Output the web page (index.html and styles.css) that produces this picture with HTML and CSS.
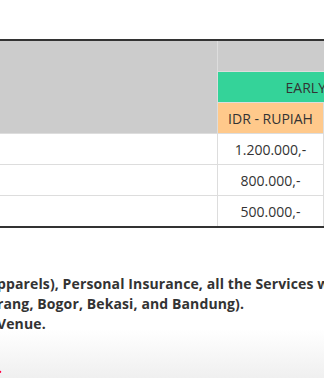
FILE: index.html
```html
<!DOCTYPE html>
<html>
<head>
<meta charset="utf-8">
<link rel="stylesheet" href="styles.css">
</head>
<body>
<div class="page">
  <table class="price">
    <tr>
      <th class="label" rowspan="3"></th>
      <th class="blank" colspan="2"></th>
    </tr>
    <tr>
      <th class="early" colspan="2">EARLY BIRD</th>
    </tr>
    <tr>
      <th class="cur">IDR - RUPIAH</th>
      <th class="cur">USD - DOLLAR</th>
    </tr>
    <tr><td></td><td class="num">1.200.000,-</td><td class="num">100,-</td></tr>
    <tr><td></td><td class="num">800.000,-</td><td class="num">70,-</td></tr>
    <tr><td></td><td class="num">500.000,-</td><td class="num">45,-</td></tr>
  </table>
  <p class="notes">pparels), Personal Insurance, all the Services which are provided<br>rang, Bogor, Bekasi, and Bandung).<br>Venue.</p>
  <div class="foot">
    <span class="red">.</span>
  </div>
</div>
</body>
</html>
```
FILE: styles.css
```css
html, body {
  margin: 0;
  padding: 0;
  overflow: hidden;
  background: #fff;
}
.page {
  width: 324px;
  font-family: "Open Sans", "Liberation Sans", sans-serif;
  color: #333;
  padding-top: 39px;
}
.price {
  border-collapse: collapse;
  border-top: 2px solid #333;
  border-bottom: 2px solid #333;
  font-size: 14px;
  table-layout: fixed;
  width: 430px;
}
.price th, .price td {
  height: 30px;
  padding: 0;
  border: 1px solid #ddd;
  font-weight: normal;
  text-align: center;
}
.price tr:first-child th { border-top: none; }
.price tr:last-child td { border-bottom: none; }
.price th:first-child, .price td:first-child { border-left: none; }
.label { width: 217px; background: #ccc; }
.blank { background: #ccc; }
.early { background: #34d399; }
.cur { background: #ffc98b; }
.price td:nth-child(2), .price .cur:first-child { width: 105px; }
.notes {
  margin: 46px 0 0 -3px;
  font-size: 14px;
  line-height: 20px;
  font-weight: bold;
  letter-spacing: 0.12px;
  white-space: nowrap;
}
.foot {
  margin-top: -5px;
  height: 60px;
  background: linear-gradient(#fff, #ececec);
  position: relative;
}
.red {
  position: absolute;
  left: -2px;
  top: 36px;
  font-size: 14px;
  line-height: 6px;
  font-weight: bold;
  color: #f00;
}
```
